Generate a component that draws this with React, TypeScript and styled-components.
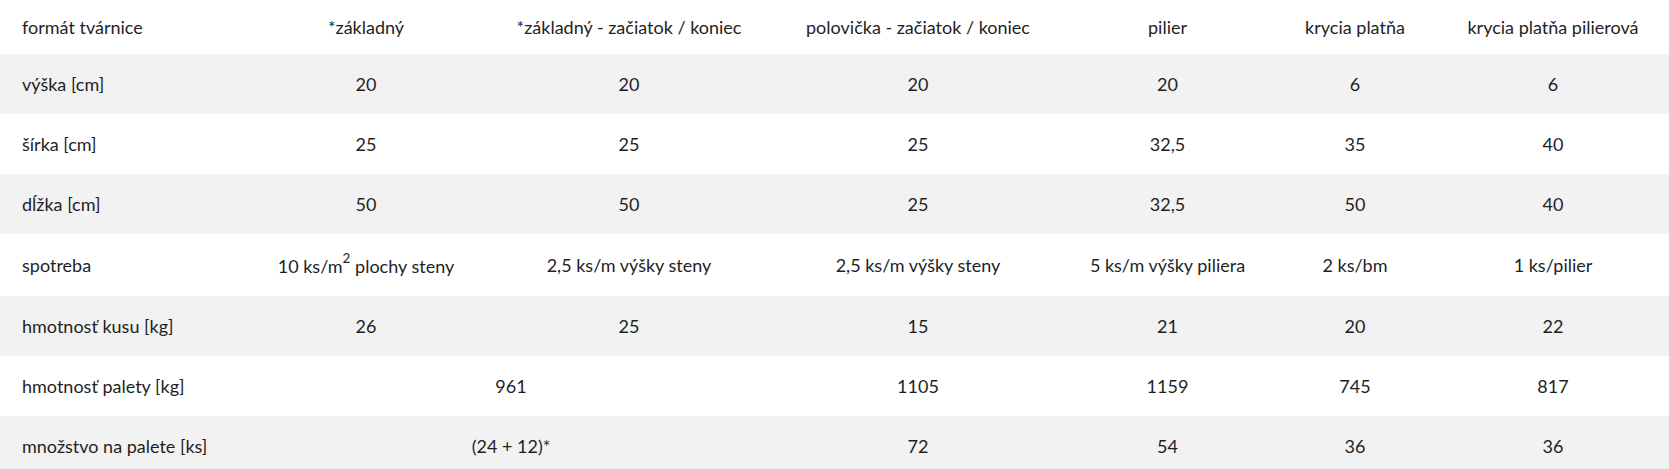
import React from 'react';
import styled, { createGlobalStyle } from 'styled-components';

const GlobalStyle = createGlobalStyle`
  body {
    margin: 0;
    background: #ffffff;
    font-family: Lato, "Noto Sans", sans-serif;
    color: #1f1f1f;
  }
`;

const columns = [248, 236, 290, 288, 211, 164, 232];

const headers = [
  'formát tvárnice',
  '*základný',
  '*základný - začiatok / koniec',
  'polovička - začiatok / koniec',
  'pilier',
  'krycia platňa',
  'krycia platňa pilierová',
];

type Cell = { text: React.ReactNode; span?: number };

const rows: { label: string; cells: Cell[] }[] = [
  { label: 'výška [cm]', cells: [{ text: '20' }, { text: '20' }, { text: '20' }, { text: '20' }, { text: '6' }, { text: '6' }] },
  { label: 'šírka [cm]', cells: [{ text: '25' }, { text: '25' }, { text: '25' }, { text: '32,5' }, { text: '35' }, { text: '40' }] },
  { label: 'dĺžka [cm]', cells: [{ text: '50' }, { text: '50' }, { text: '25' }, { text: '32,5' }, { text: '50' }, { text: '40' }] },
  {
    label: 'spotreba',
    cells: [
      { text: <>10 ks/m<sup>2</sup> plochy steny</> },
      { text: '2,5 ks/m výšky steny' },
      { text: '2,5 ks/m výšky steny' },
      { text: '5 ks/m výšky piliera' },
      { text: '2 ks/bm' },
      { text: '1 ks/pilier' },
    ],
  },
  { label: 'hmotnosť kusu [kg]', cells: [{ text: '26' }, { text: '25' }, { text: '15' }, { text: '21' }, { text: '20' }, { text: '22' }] },
  { label: 'hmotnosť palety [kg]', cells: [{ text: '961', span: 2 }, { text: '1105' }, { text: '1159' }, { text: '745' }, { text: '817' }] },
  { label: 'množstvo na palete [ks]', cells: [{ text: '(24 + 12)*', span: 2 }, { text: '72' }, { text: '54' }, { text: '36' }, { text: '36' }] },
];

const App: React.FC = () => {
  return (
    <>
      <GlobalStyle />
      <Table>
        <colgroup>
          {columns.map((w, i) => (
            <col key={i} style={{ width: w }} />
          ))}
        </colgroup>
        <thead>
          <HeadRow>
            {headers.map((h, i) => (
              <HeadCell key={h} $first={i === 0}>{h}</HeadCell>
            ))}
          </HeadRow>
        </thead>
        <tbody>
          {rows.map((row) => (
            <Row key={row.label}>
              <Cell $first>{row.label}</Cell>
              {row.cells.map((c, i) => (
                <Cell key={i} colSpan={c.span}>{c.text}</Cell>
              ))}
            </Row>
          ))}
        </tbody>
      </Table>
    </>
  );
};

const Table = styled.table`
  width: 100%;
  border-collapse: collapse;
  table-layout: fixed;
  font-size: 18px;
`;

const HeadRow = styled.tr`
  background: #ffffff;
`;

const HeadCell = styled.th<{ $first?: boolean }>`
  font-weight: 400;
  text-align: ${(p) => (p.$first ? 'left' : 'center')};
  padding: 15px 0 15px ${(p) => (p.$first ? '22px' : '0')};
  line-height: 24px;
  white-space: nowrap;
`;

const Row = styled.tr`
  &:nth-child(odd) {
    background: #f2f2f2;
  }
`;

const Cell = styled.td<{ $first?: boolean }>`
  text-align: ${(p) => (p.$first ? 'left' : 'center')};
  padding: 18px 0 18px ${(p) => (p.$first ? '22px' : '0')};
  line-height: 24px;
  white-space: nowrap;

  sup {
    font-size: 0.75em;
    line-height: 1;
    vertical-align: 0.75em;
  }
`;

export default App;
